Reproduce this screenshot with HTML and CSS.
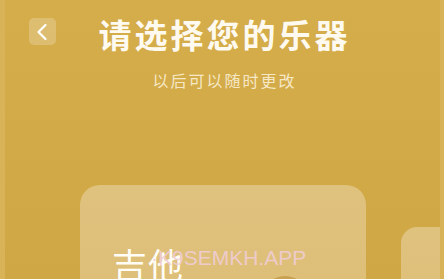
FILE: index.html
```html
<!DOCTYPE html>
<html lang="zh">
<head>
<meta charset="utf-8">
<link rel="stylesheet" href="styles.css">
</head>
<body>
<div class="screen">
  <header class="header">
    <button class="back" aria-label="返回">
      <svg viewBox="0 0 26 26" width="26" height="26"><path d="M15.5 6 L8.5 13 L15.5 20" fill="none" stroke="#fff" stroke-width="2.2" stroke-linecap="round" stroke-linejoin="round"/></svg>
    </button>
    <h1 class="title">请选择您的乐器</h1>
    <span></span>
  </header>
  <p class="subtitle">以后可以随时更改</p>
  <div class="cards">
    <div class="card">
      <div class="card-name">吉他</div>
      <div class="card-icon"></div>
    </div>
    <div class="card card-next"></div>
  </div>
  <div class="watermark">·K9SEMKH.APP</div>
</div>
</body>
</html>
```
FILE: styles.css
```css
html, body {
  margin: 0;
  padding: 0;
}
body {
  width: 444px;
  height: 279px;
  overflow: hidden;
  background: #d3aa48;
}
.screen {
  position: relative;
  width: 444px;
  height: 279px;
  box-sizing: border-box;
  overflow: hidden;
  border-left: 5px solid #d8b357;
  border-right: 4px solid #d8b357;
  background: linear-gradient(180deg, #d5ad4b 0%, #d1a946 60%, #cfa744 100%);
  font-family: "Noto Sans CJK SC", "Noto Sans", sans-serif;
  display: flex;
  flex-direction: column;
}
.header {
  display: grid;
  grid-template-columns: 1fr auto 1fr;
  align-items: start;
  padding-top: 18px;
}
.back {
  justify-self: start;
  margin-left: 24px;
  width: 27px;
  height: 27px;
  padding: 0;
  border: none;
  border-radius: 5px;
  background: rgba(255, 255, 255, 0.22);
  display: flex;
  align-items: center;
  justify-content: center;
}
.back svg {
  display: block;
}
.title {
  margin: 0;
  margin-left: 4px;
  font-size: 33px;
  line-height: 33px;
  font-weight: 700;
  letter-spacing: 3px;
  color: #fffaf0;
}
.subtitle {
  margin: 21px 0 0 0;
  text-align: center;
  font-size: 16px;
  line-height: 16px;
  letter-spacing: 2px;
  color: #f6e8c6;
  padding-left: 4px;
}
.cards {
  display: flex;
  gap: 35px;
  padding-left: 75px;
  margin-top: 97px;
  align-items: flex-start;
}
.card {
  flex: none;
  position: relative;
  width: 286px;
  height: 200px;
  border-radius: 20px;
  background: linear-gradient(180deg, #dfc27e 0%, #dcbc72 100%);
  box-sizing: border-box;
  padding: 61px 0 0 32px;
  overflow: hidden;
}
.card-next {
  width: 120px;
  margin-top: 42px;
  border-radius: 16px;
}
.card-name {
  font-size: 35px;
  line-height: 35px;
  color: #fffdf5;
  letter-spacing: 1px;
}
.card-icon {
  position: absolute;
  left: 180px;
  top: 91px;
  width: 50px;
  height: 50px;
  border-radius: 50%;
  background: #c9a151;
}
.watermark {
  position: absolute;
  left: 146px;
  top: 246px;
  font-family: "Liberation Sans", Arial, sans-serif;
  font-size: 21px;
  line-height: 24px;
  color: rgba(240, 205, 215, 0.9);
}
```
